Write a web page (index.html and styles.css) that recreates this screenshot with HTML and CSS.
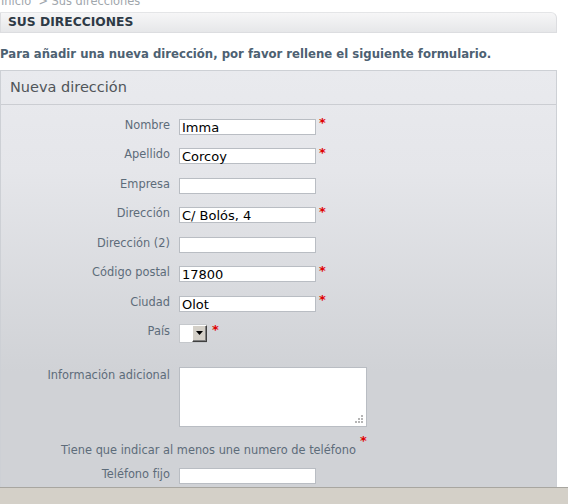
FILE: index.html
```html
<!DOCTYPE html>
<html lang="es">
<head>
<meta charset="utf-8">
<title>Sus direcciones</title>
<link rel="stylesheet" href="styles.css">
</head>
<body>
<div class="page">
  <div class="breadcrumb">Inicio &nbsp;&gt; Sus direcciones</div>
  <h1 class="title-bar">SUS DIRECCIONES</h1>
  <p class="intro">Para añadir una nueva dirección, por favor rellene el siguiente formulario.</p>
  <div class="box">
    <div class="box-head">Nueva dirección</div>
    <div class="box-body">
      <div class="row"><span class="label">Nombre</span><span class="field">Imma</span><span class="req">*</span></div>
      <div class="row"><span class="label">Apellido</span><span class="field">Corcoy</span><span class="req">*</span></div>
      <div class="row"><span class="label">Empresa</span><span class="field"></span></div>
      <div class="row"><span class="label">Dirección</span><span class="field">C/ Bolós, 4</span><span class="req">*</span></div>
      <div class="row"><span class="label">Dirección (2)</span><span class="field"></span></div>
      <div class="row"><span class="label">Código postal</span><span class="field">17800</span><span class="req">*</span></div>
      <div class="row"><span class="label">Ciudad</span><span class="field">Olot</span><span class="req">*</span></div>
      <div class="row"><span class="label">País</span><span class="select"><span class="select-val"></span><span class="select-btn"><svg width="9" height="5" viewBox="0 0 9 5"><path d="M1 0h7L4.5 4z" fill="#000"/></svg></span></span><span class="req">*</span></div>
      <div class="row row-area"><span class="label">Información adicional</span><span class="area"><svg class="grip" width="10" height="10" viewBox="0 0 10 10"><rect x="8" y="2" width="2" height="2" fill="#b5b5b5"/><rect x="5" y="5" width="2" height="2" fill="#b5b5b5"/><rect x="8" y="5" width="2" height="2" fill="#b5b5b5"/><rect x="2" y="8" width="2" height="2" fill="#b5b5b5"/><rect x="5" y="8" width="2" height="2" fill="#b5b5b5"/><rect x="8" y="8" width="2" height="2" fill="#b5b5b5"/></svg></span></div>
      <div class="note">Tiene que indicar al menos une numero de teléfono <span class="req">*</span></div>
      <div class="row row-last"><span class="label">Teléfono fijo</span><span class="field"></span></div>
    </div>
  </div>
</div>
<div class="statusbar"></div>
</body>
</html>
```
FILE: styles.css
```css
html, body {
  margin: 0;
  padding: 0;
  background: #fff;
  overflow: hidden;
}
body {
  font-family: "DejaVu Sans", Verdana, sans-serif;
  font-size: 11.4px;
  color: #5d6c7a;
}
.page {
  width: 557px;
}
.breadcrumb {
  height: 12px;
  line-height: 12px;
  margin-top: -5px;
  padding-left: 1px;
  color: #a0a6ac;
  font-size: 11.4px;
}
.title-bar {
  margin: 5px 0 0 0;
  height: 19px;
  line-height: 19px;
  padding: 0 0 0 7px;
  font-size: 12.3px;
  font-weight: bold;
  color: #2e3a46;
  background: linear-gradient(#f6f6f7, #e6e7e9);
  border: 1px solid #dcdde0;
  border-top-color: #e4e5e7;
  border-top-right-radius: 6px;
}
.intro {
  margin: 13px 0 0 0;
  line-height: 16px;
  font-size: 11.7px;
  font-weight: bold;
  color: #4d6172;
}
.box {
  margin-top: 8px;
  border: 1px solid #cdd0d5;
  border-bottom: none;
  background: linear-gradient(#e9eaee 0, #e5e6ea 100px, #d0d2d6 300px, #d0d2d6 100%);
}
.box-head {
  height: 33px;
  line-height: 33px;
  padding-left: 9px;
  font-size: 14.5px;
  color: #50555a;
  border-bottom: 1px solid #cbcdd2;
}
.box-body {
  padding: 7px 0 4px 0;
}
.row {
  display: flex;
  align-items: center;
  height: 29.5px;
}
.label {
  width: 169px;
  text-align: right;
  padding-right: 9px;
  flex: none;
  position: relative;
  top: -2px;
}
.field {
  width: 131px;
  height: 14px;
  line-height: 15px;
  padding: 0 2px;
  background: #fff;
  border: 1px solid #b9bdc3;
  font-size: 13px;
  color: #000;
  flex: none;
}
.req {
  color: #e00000;
  font-size: 13px;
  font-weight: bold;
  margin-left: 3px;
  align-self: flex-start;
  margin-top: 3px;
}
.select {
  display: flex;
  width: 27px;
  height: 17px;
  border: 1px solid #c5c8cc;
  border-right: none;
  background: #fff;
  flex: none;
}
.select-val {
  width: 12px;
}
.select-btn {
  width: 15px;
  height: 17px;
  box-sizing: border-box;
  background: #d4d0c8;
  border-top: 1px solid #fff;
  border-left: 1px solid #fff;
  border-right: 1px solid #404040;
  border-bottom: 1px solid #404040;
  box-shadow: inset -1px -1px 0 #808080;
  display: flex;
  align-items: center;
  justify-content: center;
}
.row .select + .req {
  margin-left: 5px;
}
.row-area {
  height: auto;
  align-items: flex-start;
  margin-top: 19px;
}
.row-area .label {
  top: 0;
  padding-top: 1px;
}
.area {
  position: relative;
  width: 186px;
  height: 58px;
  background: #fff;
  border: 1px solid #b9bdc3;
  flex: none;
}
.grip {
  position: absolute;
  right: 3px;
  bottom: 3px;
}
.note {
  margin-top: 10px;
  padding-left: 60px;
  height: 20px;
  display: flex;
  align-items: flex-end;
}
.note .req {
  margin-left: 4px;
  margin-top: -4px;
}
.row-last {
  margin-top: 4px;
}
.statusbar {
  position: fixed;
  left: 0;
  right: 0;
  bottom: 0;
  height: 16px;
  background: #d4d0c8;
  border-top: 1px solid #a8a6a0;
}
```
